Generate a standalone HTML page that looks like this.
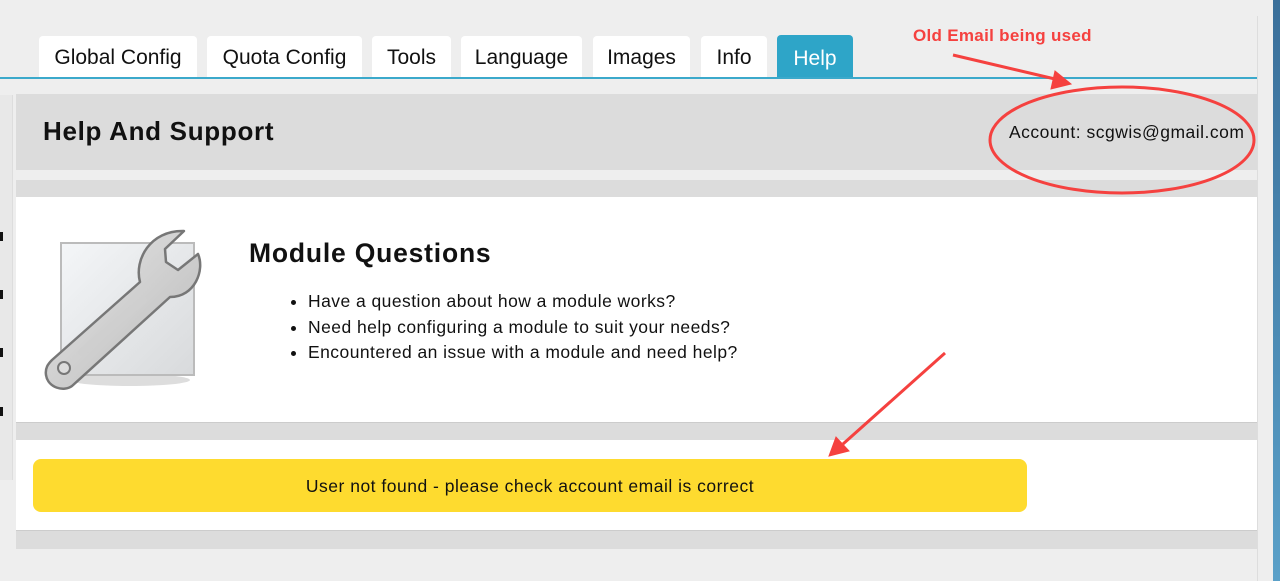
<!DOCTYPE html>
<html><head><meta charset="utf-8"><style>
*{margin:0;padding:0;box-sizing:border-box}
body{width:1280px;height:581px;background:#eeeeee;position:relative;overflow:hidden;font-family:"Liberation Sans",sans-serif;color:#111}
.a{position:absolute}
.tab{position:absolute;top:36px;height:42px;background:#fff;border-radius:4px 4px 0 0;font-size:21px;line-height:44px;text-align:center;color:#111}
.g{background:#dcdcdc}
.w{background:#fff}
li{font-size:17.5px;line-height:25.5px;letter-spacing:0.45px}
</style></head><body>
<div class="a" style="left:1257px;top:16px;width:1px;height:565px;background:#ddd"></div>
<div class="a" style="left:1273px;top:0;width:7px;height:581px;background:linear-gradient(#3a6f9a,#5aa0c8)"></div>
<div class="a" style="left:0;top:95px;width:13px;height:385px;background:#e8e8e8;border-right:1px solid #ddd"></div>
<div class="a" style="left:0;top:232px;width:3px;height:9px;background:#111"></div>
<div class="a" style="left:0;top:290px;width:3px;height:9px;background:#111"></div>
<div class="a" style="left:0;top:348px;width:3px;height:9px;background:#111"></div>
<div class="a" style="left:0;top:407px;width:3px;height:9px;background:#111"></div>

<div class="tab" style="left:39px;width:158px">Global Config</div>
<div class="tab" style="left:207px;width:155px">Quota Config</div>
<div class="tab" style="left:372px;width:79px">Tools</div>
<div class="tab" style="left:461px;width:121px">Language</div>
<div class="tab" style="left:593px;width:97px">Images</div>
<div class="tab" style="left:701px;width:66px">Info</div>
<div class="tab" style="left:777px;width:76px;background:#2ea5c8;color:#fff;top:35px;height:43px;line-height:47px">Help</div>
<div class="a" style="left:0;top:77px;width:1257px;height:2px;background:#3ba9cb"></div>

<div class="a g" style="left:16px;top:94px;width:1241px;height:76px"></div>
<div class="a" style="left:43px;top:116px;font-size:26px;font-weight:bold;letter-spacing:0.7px">Help And Support</div>
<div class="a" style="left:1009px;top:122px;font-size:17.5px;letter-spacing:0.5px">Account: scgwis@gmail.com</div>

<div class="a g" style="left:16px;top:180px;width:1241px;height:17px"></div>
<div class="a w" style="left:16px;top:197px;width:1241px;height:225px"></div>
<div class="a g" style="left:16px;top:422px;width:1241px;height:18px;border-top:1px solid #ccc"></div>
<div class="a w" style="left:16px;top:440px;width:1241px;height:90px"></div>
<div class="a g" style="left:16px;top:530px;width:1241px;height:19px;border-top:1px solid #ccc"></div>

<svg class="a" style="left:40px;top:225px" width="175" height="170" viewBox="40 225 175 170">
<defs><linearGradient id="p" x1="0" y1="0" x2="1" y2="1"><stop offset="0" stop-color="#f4f6f8"/><stop offset="1" stop-color="#d8dadc"/></linearGradient>
<linearGradient id="m" x1="0" y1="0" x2="1" y2="1"><stop offset="0" stop-color="#e8e8e8"/><stop offset="1" stop-color="#b8b8b8"/></linearGradient></defs>
<ellipse cx="130" cy="380" rx="60" ry="6" fill="#ddd"/>
<rect x="61" y="243" width="133" height="132" fill="url(#p)" stroke="#bbb" stroke-width="2"/>
<path d="M184 231 L165 249 L166 262 L178 270 L198 254 C205 270 195 297 170 297 L72 386 C64 392 48 388 46 375 C45 368 48 364 52 360 L140 282 C134 260 150 230 184 231 Z" fill="url(#m)" stroke="#777" stroke-width="2.5" stroke-linejoin="round"/>
<path d="M82 352 L143 300" stroke="#cfcfcf" stroke-width="8" stroke-linecap="round"/>
<circle cx="64" cy="368" r="6" fill="#ddd" stroke="#777" stroke-width="2"/>
</svg>

<div class="a" style="left:249px;top:238px;font-size:26.5px;font-weight:bold;letter-spacing:0.8px">Module Questions</div>
<ul class="a" style="left:308px;top:289px;list-style:disc">
<li>Have a question about how a module works?</li>
<li>Need help configuring a module to suit your needs?</li>
<li>Encountered an issue with a module and need help?</li>
</ul>

<div class="a" style="left:33px;top:459px;width:994px;height:53px;background:#fedb2f;border-radius:8px;text-align:center;line-height:55px;font-size:17.5px;letter-spacing:0.5px">User not found - please check account email is correct</div>

<div class="a" style="left:913px;top:26px;font-size:17px;font-weight:bold;color:#f5413f;letter-spacing:0.3px">Old Email being used</div>
<svg class="a" style="left:0;top:0" width="1280" height="581">
<g stroke="#f5413f" fill="#f5413f" stroke-width="3">
<line x1="953" y1="55" x2="1055" y2="79"/>
<path d="M1071 84 L1051 89 L1055 71 Z" stroke-width="1"/>
<line x1="945" y1="353" x2="843" y2="444"/>
<path d="M829 456 L836 437 L849 451 Z" stroke-width="1"/>
<ellipse cx="1122" cy="140" rx="132" ry="53" fill="none"/>
</g></svg>
</body></html>
